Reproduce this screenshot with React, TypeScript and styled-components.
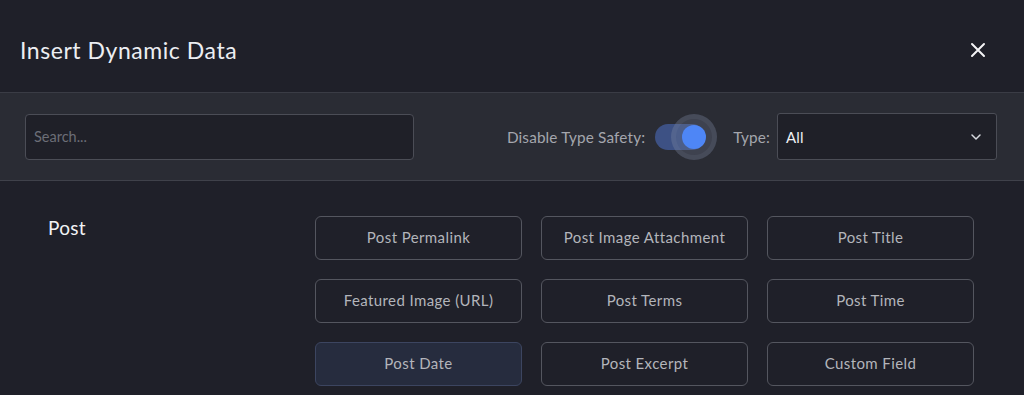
import React from "react";
import styled, { createGlobalStyle } from "styled-components";

const Global = createGlobalStyle`
  html, body { margin: 0; padding: 0; background: #1f2029; }
  body { font-family: Lato, "Noto Sans", sans-serif; -webkit-font-smoothing: antialiased; }
  * { box-sizing: border-box; }
`;

const Modal = styled.div`
  width: 1024px;
  height: 395px;
  background: #1f2029;
  overflow: hidden;
  display: flex;
  flex-direction: column;
`;

const Header = styled.div`
  height: 93px;
  display: flex;
  align-items: center;
  justify-content: space-between;
  padding: 7px 38px 0 20px;
  border-bottom: 1px solid #3a3c45;
`;

const Title = styled.h1`
  margin: 0;
  font-size: 23px;
  font-weight: 400;
  color: #eceef2;
  letter-spacing: 0.55px;
`;

const CloseButton = styled.button`
  background: none;
  border: none;
  padding: 0;
  width: 16px;
  height: 16px;
  display: flex;
  align-items: center;
  justify-content: center;
  cursor: pointer;
`;

const Toolbar = styled.div`
  height: 88px;
  background: #2a2c34;
  border-bottom: 1px solid #3f414a;
  display: flex;
  align-items: center;
  padding: 0 27px 0 25px;
`;

const SearchInput = styled.input`
  width: 389px;
  height: 46px;
  background: #1f2028;
  border: 1px solid #4b4d56;
  border-radius: 4px;
  padding: 0 8px;
  font-family: Lato, "Noto Sans", sans-serif;
  font-size: 14.5px;
  color: #e0e0e0;
  outline: none;
  &::placeholder { color: #6c6e77; }
`;

const Spacer = styled.div`
  flex: 1;
`;

const Label = styled.span`
  font-size: 15.3px;
  color: #a4a6ad;
  letter-spacing: 0.15px;
`;

const SwitchWrap = styled.div`
  position: relative;
  width: 56px;
  height: 46px;
  margin: 0 23px 0 9px;
`;

const Track = styled.div`
  position: absolute;
  left: 1px;
  top: 10px;
  width: 50px;
  height: 26px;
  border-radius: 13px;
  background: #3d5184;
`;

const Halo = styled.div`
  position: absolute;
  left: 17px;
  top: 0;
  width: 46px;
  height: 46px;
  border-radius: 50%;
  background: rgba(120, 130, 160, 0.26);
  box-shadow: inset 0 0 0 5px rgba(150, 160, 190, 0.1);
`;

const Knob = styled.div`
  position: absolute;
  left: 28px;
  top: 11px;
  width: 24px;
  height: 24px;
  border-radius: 50%;
  background: #4e86f6;
`;

const SelectBox = styled.div`
  width: 220px;
  height: 47px;
  margin-left: 7px;
  background: #1f2028;
  border: 1px solid #4b4d56;
  border-radius: 3px;
  display: flex;
  align-items: center;
  justify-content: space-between;
  padding: 0 14px 0 8px;
  font-size: 15px;
  color: #eef0f3;
  letter-spacing: 0.2px;
`;

const Content = styled.div`
  flex: 1;
  display: grid;
  grid-template-columns: 267px 1fr;
  padding: 34px 51px 0 48px;
`;

const SectionTitle = styled.h2`
  margin: 0;
  font-size: 19px;
  font-weight: 400;
  color: #f2f3f5;
  line-height: 26px;
  letter-spacing: 0.3px;
`;

const Grid = styled.div`
  display: grid;
  grid-template-columns: repeat(3, 207px);
  column-gap: 19px;
  row-gap: 19px;
  align-content: start;
  margin-top: 1px;
`;

const DataButton = styled.button<{ $active?: boolean }>`
  height: 44px;
  border-radius: 6px;
  border: 1px solid ${(p) => (p.$active ? "#3c4560" : "#54565f")};
  background: ${(p) => (p.$active ? "#262c3e" : "transparent")};
  color: #b3b5bb;
  font-family: Lato, "Noto Sans", sans-serif;
  font-size: 15px;
  letter-spacing: 0.4px;
  padding: 0 0 2px;
  cursor: pointer;
`;

const items = [
  "Post Permalink",
  "Post Image Attachment",
  "Post Title",
  "Featured Image (URL)",
  "Post Terms",
  "Post Time",
  "Post Date",
  "Post Excerpt",
  "Custom Field",
];

export default function App() {
  return (
    <Modal>
      <Global />
      <Header>
        <Title>Insert Dynamic Data</Title>
        <CloseButton aria-label="Close">
          <svg width="16" height="16" viewBox="0 0 16 16">
            <path d="M2 2L14 14M14 2L2 14" stroke="#f4f4f6" strokeWidth="2" strokeLinecap="round" />
          </svg>
        </CloseButton>
      </Header>
      <Toolbar>
        <SearchInput placeholder="Search..." />
        <Spacer />
        <Label>Disable Type Safety:</Label>
        <SwitchWrap>
          <Track />
          <Halo />
          <Knob />
        </SwitchWrap>
        <Label>Type:</Label>
        <SelectBox>
          <span>All</span>
          <svg width="12" height="8" viewBox="0 0 12 8">
            <path d="M2 2L6 6L10 2" stroke="#d8dae0" strokeWidth="1.5" fill="none" strokeLinecap="round" strokeLinejoin="round" />
          </svg>
        </SelectBox>
      </Toolbar>
      <Content>
        <SectionTitle>Post</SectionTitle>
        <Grid>
          {items.map((t) => (
            <DataButton key={t} $active={t === "Post Date"}>
              {t}
            </DataButton>
          ))}
        </Grid>
      </Content>
    </Modal>
  );
}
